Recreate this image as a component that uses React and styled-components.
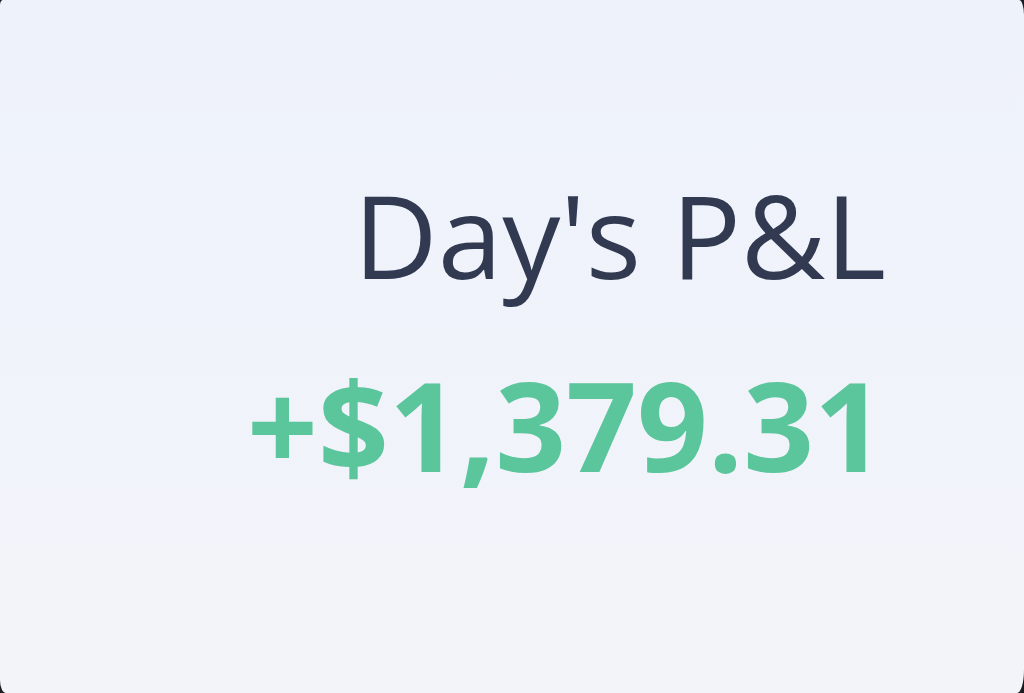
import React from "react";
import styled, { createGlobalStyle } from "styled-components";

const Global = createGlobalStyle`
  html, body { margin: 0; padding: 0; background: #1a1c22; }
  #root { width: 1024px; height: 693px; }
`;

const Card = styled.div`
  box-sizing: border-box;
  width: 1024px;
  height: 693px;
  background: linear-gradient(180deg, #eef2fb 0%, #f0f3fa 50%, #f2f4f9 100%);
  border-radius: 3px 5px 7px 6px / 5px 15px 23px 13px;
  display: flex;
  flex-direction: column;
  align-items: flex-end;
  padding: 176px 138px 0 0;
  font-family: "Open Sans", "Noto Sans", sans-serif;
`;

const Label = styled.div`
  font-size: 116px;
  font-weight: 400;
  line-height: 1;
  color: #323a52;
`;

const Amount = styled.div`
  margin-top: 70px;
  font-size: 124px;
  font-weight: 700;
  line-height: 1;
  color: ${(p) => (p.positive ? "#5bc59b" : "#e0605a")};
  margin-right: 1px;
`;

export default function App() {
  return (
    <>
      <Global />
      <Card>
        <Label>Day's P&amp;L</Label>
        <Amount positive>+$1,379.31</Amount>
      </Card>
    </>
  );
}
